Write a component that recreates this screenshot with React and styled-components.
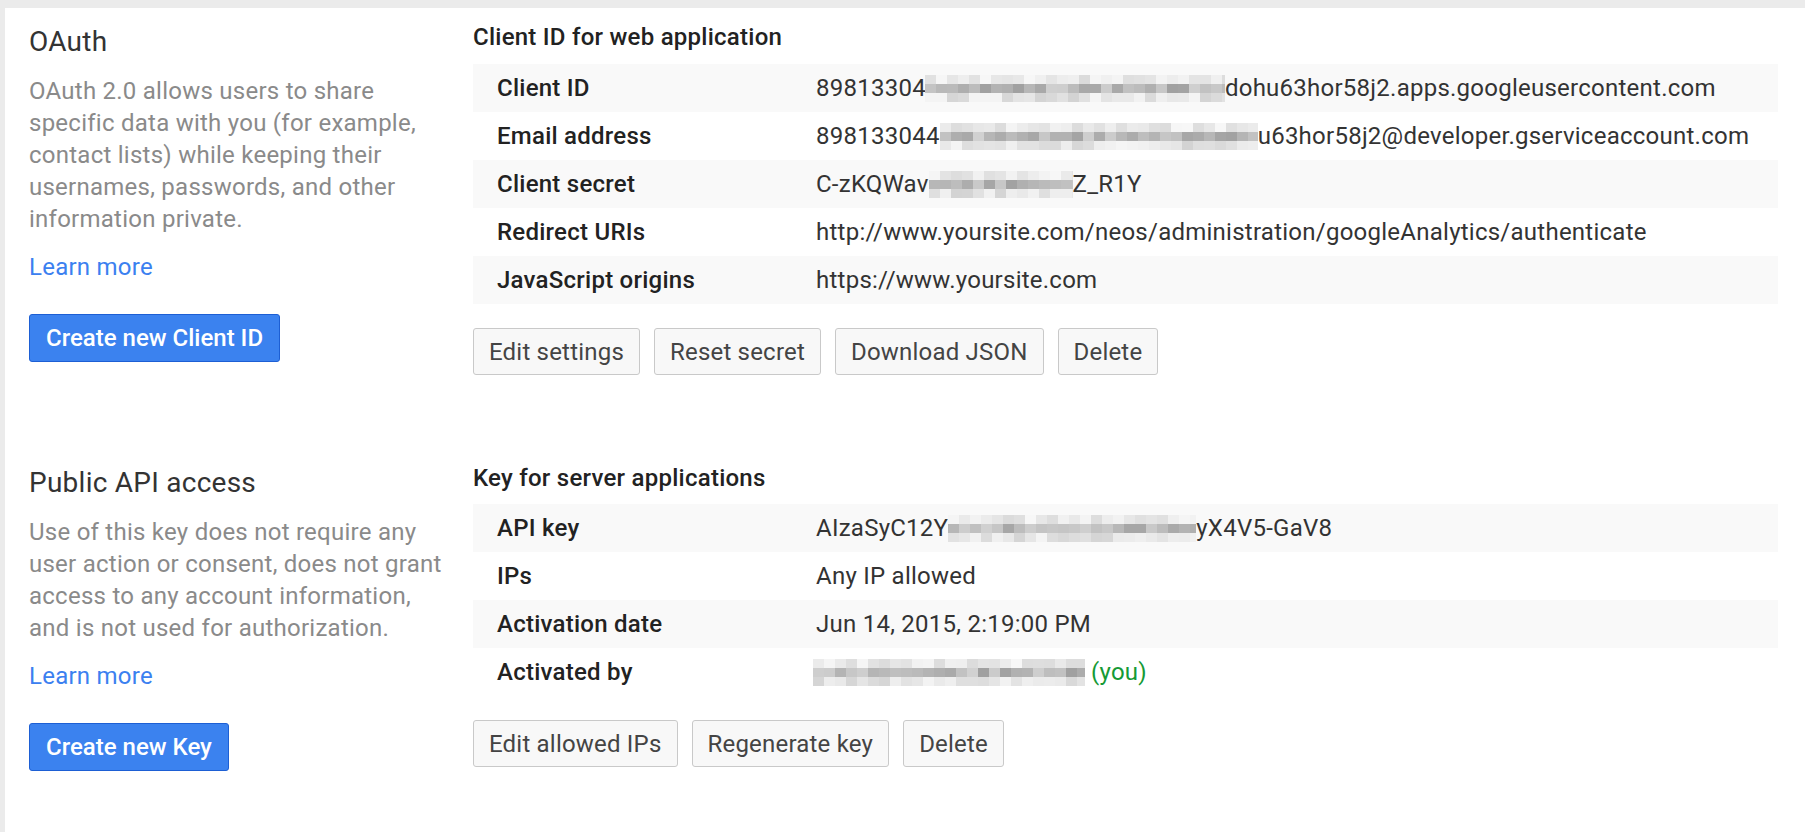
import React from 'react'
import styled, { createGlobalStyle } from 'styled-components'

const GlobalStyle = createGlobalStyle`
  html, body {
    margin: 0;
    padding: 0;
    background: #ebebeb;
  }
  body {
    font-family: Roboto, "Liberation Sans", Arial, sans-serif;
    letter-spacing: 0.25px;
    -webkit-font-smoothing: antialiased;
  }
  button {
    letter-spacing: 0.2px;
  }
`

const Page = styled.div`
  margin: 8px 0 0 5px;
  min-height: 824px;
  box-sizing: border-box;
  background: #fff;
  padding: 13px 27px 40px 24px;
`

const Section = styled.section`
  display: grid;
  grid-template-columns: 430px 1fr;
  column-gap: 14px;
  & + & {
    margin-top: 87px;
  }
`

const Intro = styled.div`
  padding-top: 5px;
`

const Title = styled.h2`
  margin: 0;
  font-size: 28px;
  line-height: 32px;
  font-weight: 400;
  color: #333;
`

const Desc = styled.p`
  max-width: 420px;
  margin: 17px 0 0;
  font-size: 24px;
  line-height: 32px;
  color: #8a8a8a;
`

const LearnMore = styled.a`
  display: block;
  width: max-content;
  margin-top: 16px;
  font-size: 24px;
  line-height: 32px;
  color: #3b80f0;
  text-decoration: none;
`

const PrimaryButton = styled.button`
  display: block;
  margin-top: 31px;
  height: 48px;
  padding: 0 16px;
  border: 1px solid #1d5fd4;
  border-radius: 3px;
  background: #3b82ef;
  color: #fff;
  font-family: Roboto, "Liberation Sans", Arial, sans-serif;
  font-size: 24px;
  font-weight: 500;
  letter-spacing: 0;
  cursor: pointer;
`

const Detail = styled.div``

const Heading = styled.h3`
  margin: 0;
  font-size: 24px;
  line-height: 32px;
  font-weight: 500;
  color: #222;
`

const Table = styled.div`
  margin-top: ${p => p.$gap || 11}px;
`

const Row = styled.div`
  display: grid;
  grid-template-columns: 343px 1fr;
  align-items: center;
  height: 48px;
  font-size: 24px;
  line-height: 48px;
  &:nth-child(odd) {
    background: #f9f9f9;
  }
`

const Label = styled.div`
  padding-left: 24px;
  font-weight: 500;
  color: #222;
`

const Value = styled.div`
  display: flex;
  align-items: center;
  white-space: nowrap;
  color: #333;
`

const You = styled.span`
  margin-left: 6px;
  color: #159a35;
`

const Actions = styled.div`
  display: flex;
  gap: 14px;
  margin-top: 24px;
`

const Button = styled.button`
  height: 47px;
  padding: 0 15px;
  border: 1px solid #c9c9c9;
  border-radius: 3px;
  background: #f8f8f8;
  color: #444;
  font-family: Roboto, "Liberation Sans", Arial, sans-serif;
  font-size: 24px;
  cursor: pointer;
`

const MosaicSvg = styled.svg`
  display: block;
  flex-shrink: 0;
  margin: 0 ${p => p.$right || 0}px 0 ${p => p.$left || 0}px;
`

// pixelated blur over hidden parts of keys / emails
function Mosaic({ width, seed = 1, left, right }) {
  const cell = 11
  const cols = Math.ceil(width / cell)
  const rows = [
    [218, 248],
    [160, 210],
    [210, 246],
  ]
  let s = seed * 9301 + 49297
  const rand = () => {
    s = (s * 9301 + 49297) % 233280
    return s / 233280
  }
  const rects = []
  rows.forEach(([lo, hi], r) => {
    for (let c = 0; c < cols; c++) {
      const v = Math.round(lo + rand() * (hi - lo))
      rects.push(
        <rect
          key={r + '-' + c}
          x={c * cell}
          y={r * 9}
          width={cell}
          height={9}
          fill={`rgb(${v},${v},${v})`}
        />
      )
    }
  })
  return (
    <MosaicSvg width={width} height={27} viewBox={`0 0 ${width} 27`} $left={left} $right={right}>
      {rects}
    </MosaicSvg>
  )
}

export default function App() {
  return (
    <>
      <GlobalStyle />
      <Page>
        <Section>
          <Intro>
            <Title>OAuth</Title>
            <Desc>
              OAuth 2.0 allows users to share specific data with you (for example,
              contact lists) while keeping their usernames, passwords, and other
              information private.
            </Desc>
            <LearnMore href="#">Learn more</LearnMore>
            <PrimaryButton>Create new Client ID</PrimaryButton>
          </Intro>
          <Detail>
            <Heading>Client ID for web application</Heading>
            <Table>
              <Row>
                <Label>Client ID</Label>
                <Value>
                  89813304
                  <Mosaic width={300} seed={3} left={-1} />
                  dohu63hor58j2.apps.googleusercontent.com
                </Value>
              </Row>
              <Row>
                <Label>Email address</Label>
                <Value>
                  898133044
                  <Mosaic width={318} seed={7} />
                  u63hor58j2@developer.gserviceaccount.com
                </Value>
              </Row>
              <Row>
                <Label>Client secret</Label>
                <Value>
                  C-zKQWav
                  <Mosaic width={144} seed={11} />
                  Z_R1Y
                </Value>
              </Row>
              <Row>
                <Label>Redirect URIs</Label>
                <Value>http://www.yoursite.com/neos/administration/googleAnalytics/authenticate</Value>
              </Row>
              <Row>
                <Label>JavaScript origins</Label>
                <Value>https://www.yoursite.com</Value>
              </Row>
            </Table>
            <Actions>
              <Button>Edit settings</Button>
              <Button>Reset secret</Button>
              <Button>Download JSON</Button>
              <Button>Delete</Button>
            </Actions>
          </Detail>
        </Section>

        <Section>
          <Intro>
            <Title>Public API access</Title>
            <Desc>
              Use of this key does not require any user action or consent, does not
              grant access to any account information, and is not used for
              authorization.
            </Desc>
            <LearnMore href="#">Learn more</LearnMore>
            <PrimaryButton>Create new Key</PrimaryButton>
          </Intro>
          <Detail>
            <Heading>Key for server applications</Heading>
            <Table $gap={10}>
              <Row>
                <Label>API key</Label>
                <Value>
                  AIzaSyC12Y
                  <Mosaic width={248} seed={5} />
                  yX4V5-GaV8
                </Value>
              </Row>
              <Row>
                <Label>IPs</Label>
                <Value>Any IP allowed</Value>
              </Row>
              <Row>
                <Label>Activation date</Label>
                <Value>Jun 14, 2015, 2:19:00 PM</Value>
              </Row>
              <Row>
                <Label>Activated by</Label>
                <Value>
                  <Mosaic width={272} seed={13} left={-3} />
                  <You>(you)</You>
                </Value>
              </Row>
            </Table>
            <Actions>
              <Button>Edit allowed IPs</Button>
              <Button>Regenerate key</Button>
              <Button>Delete</Button>
            </Actions>
          </Detail>
        </Section>
      </Page>
    </>
  )
}
